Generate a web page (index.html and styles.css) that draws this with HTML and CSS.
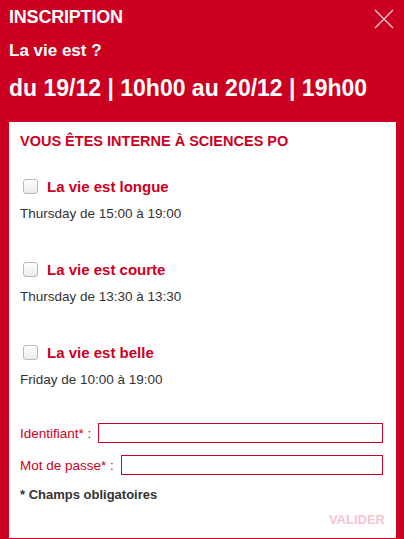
FILE: index.html
```html
<!DOCTYPE html>
<html lang="fr">
<head>
<meta charset="utf-8">
<title>Inscription</title>
<link rel="stylesheet" href="styles.css">
</head>
<body>
<div class="modal">
  <header class="head">
    <h1 class="title">INSCRIPTION</h1>
    <h2 class="event">La vie est ?</h2>
    <p class="dates">du 19/12 | 10h00 au 20/12 | 19h00</p>
    <button class="close" aria-label="Fermer">
      <svg width="20" height="20" viewBox="0 0 20 20"><path d="M1 1 L19 19 M19 1 L1 19" stroke="rgba(255,255,255,0.78)" stroke-width="1.4" fill="none"/></svg>
    </button>
  </header>
  <form class="panel">
    <h3 class="section">VOUS ÊTES INTERNE À SCIENCES PO</h3>
    <div class="session">
      <label class="choice"><input type="checkbox" class="box"><span>La vie est longue</span></label>
      <p class="when">Thursday de 15:00 à 19:00</p>
    </div>
    <div class="session">
      <label class="choice"><input type="checkbox" class="box"><span>La vie est courte</span></label>
      <p class="when">Thursday de 13:30 à 13:30</p>
    </div>
    <div class="session">
      <label class="choice"><input type="checkbox" class="box"><span>La vie est belle</span></label>
      <p class="when">Friday de 10:00 à 19:00</p>
    </div>
    <div class="fields">
      <label class="field"><span class="flabel">Identifiant* :</span><input type="text" class="input"></label>
      <label class="field"><span class="flabel">Mot de passe* :</span><input type="password" class="input"></label>
    </div>
    <p class="required">* Champs obligatoires</p>
    <div class="actions"><button type="button" class="submit">VALIDER</button></div>
  </form>
</div>
</body>
</html>
```
FILE: styles.css
```css
* { box-sizing: border-box; }
html, body { margin: 0; padding: 0; }
body {
  background: #cc0020;
  font-family: "Liberation Sans", Arial, sans-serif;
  width: 404px;
  height: 539px;
  overflow: hidden;
}
.modal { display: flex; flex-direction: column; height: 539px; }
.head { position: relative; padding: 8px 8px 0 9px; color: #fff; }
.title { margin: 0; font-size: 18px; line-height: 18px; font-weight: bold; letter-spacing: -0.2px; }
.event { margin: 16px 0 0; font-size: 17px; line-height: 17px; font-weight: bold; }
.dates { margin: 18px 0 0; font-size: 23px; line-height: 23px; font-weight: bold; }
.close {
  position: absolute; top: 9px; right: 10px;
  width: 20px; height: 20px; padding: 0; border: 0; background: none;
  display: block;
}
.close svg { display: block; }
.panel {
  margin: 22px 8px 1px 9px;
  flex: 1;
  background: #fff;
  padding: 12px 13px 0 11px;
  display: flex; flex-direction: column;
}
.section { margin: 0; font-size: 14.5px; line-height: 15px; font-weight: bold; color: #cc0022; }
.session { margin-top: 28px; }
.session + .session { margin-top: 38px; }
.choice { display: flex; align-items: center; height: 18px; gap: 9px; color: #cc0022; font-size: 15px; font-weight: bold; }
.box {
  appearance: none; -webkit-appearance: none;
  margin: 0 0 0 3px; width: 15px; height: 15px;
  border: 1px solid #b8b8b8; border-radius: 3px;
  background: linear-gradient(#ffffff, #ebebeb);
  box-shadow: inset 0 1px 0 #fff;
}
.when { margin: 11px 0 0; font-size: 13.5px; line-height: 16px; color: #333; }
.fields { margin-top: 35px; display: flex; flex-direction: column; gap: 12px; }
.field { display: flex; align-items: center; height: 20px; }
.flabel { font-size: 13.5px; color: #cc0022; margin-right: 7px; white-space: nowrap; }
.input { flex: 1; height: 20px; border: 1px solid #cc0022; margin: 0; padding: 0 3px; background: #fff; outline: none; }
.required { margin: 11.5px 0 0; font-size: 13px; line-height: 16px; font-weight: bold; color: #333; }
.actions { display: flex; justify-content: flex-end; margin-top: 9px; }
.submit { border: 0; background: none; padding: 0; margin-right: -2px; font-family: inherit; font-size: 13px; line-height: 16px; font-weight: bold; color: #f4c5cd; }
```
